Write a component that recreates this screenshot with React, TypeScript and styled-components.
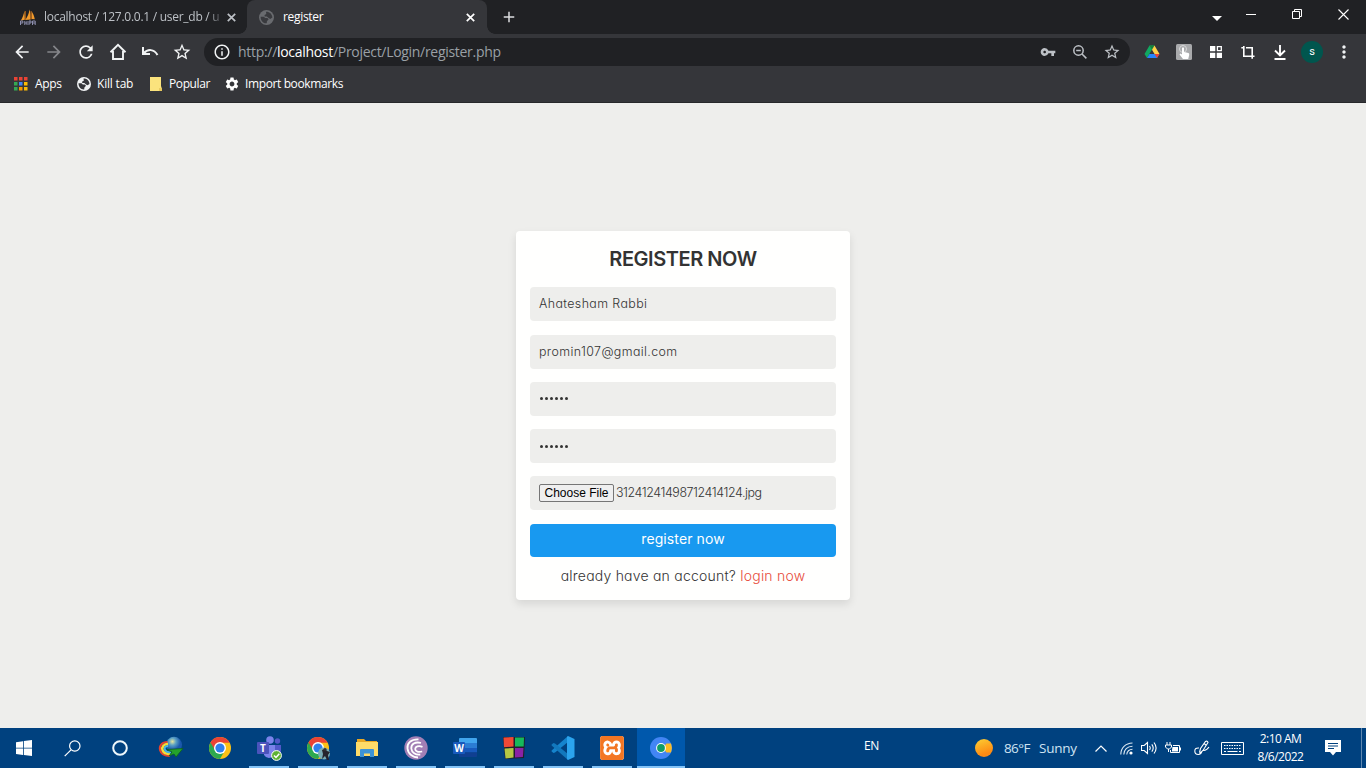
import React from 'react';
import styled, { createGlobalStyle, css } from 'styled-components';
import {
  MdArrowBack, MdArrowForward, MdRefresh, MdStarBorder, MdVpnKey,
  MdInfoOutline, MdMoreVert, MdSettings, MdAdd,
} from 'react-icons/md';
import { SiXampp } from 'react-icons/si';

const GlobalStyle = createGlobalStyle`
  * { box-sizing: border-box; }
  body { margin: 0; overflow: hidden; background: #eeeeec; }
  svg { display: block; flex: none; }
`;

const ui = `"Open Sans", "Noto Sans", sans-serif`;
const geo = `Inter, "Open Sans", sans-serif`;

const Screen = styled.div`
  width: 1366px;
  height: 768px;
  display: flex;
  flex-direction: column;
  font-family: ${ui};
  white-space: nowrap;
`;

const TabStrip = styled.header`
  height: 34px;
  flex: none;
  display: flex;
  background: #202124;
`;

const Tab = styled.div<{ $active?: boolean }>`
  width: ${p => (p.$active ? 240 : 247)}px;
  height: 34px;
  padding-left: ${p => (p.$active ? 12 : 20)}px;
  padding-right: ${p => (p.$active ? 12 : 11)}px;
  display: flex;
  align-items: center;
  color: ${p => (p.$active ? '#fff' : '#bdc1c6')};
  position: relative;
  ${p => p.$active && css`
    background: #35363a;
    border-radius: 8px 8px 0 0;
    &::before, &::after {
      content: '';
      position: absolute;
      bottom: 0;
      width: 8px;
      height: 8px;
    }
    &::before { left: -8px; background: radial-gradient(circle at 0 0, transparent 7.5px, #35363a 8px); }
    &::after { right: -8px; background: radial-gradient(circle at 100% 0, transparent 7.5px, #35363a 8px); }
  `}
`;

const TabTitle = styled.span<{ $fade?: boolean }>`
  flex: 1;
  margin-left: ${p => (p.$fade ? 8 : 9)}px;
  margin-right: 8px;
  font-size: 12px;
  line-height: 18px;
  letter-spacing: ${p => (p.$fade ? '-0.27px' : '-0.32px')};
  ${p => p.$fade && css`mask-image: linear-gradient(90deg, #000 164px, rgba(0, 0, 0, 0.2) 177px);`}
`;

const NewTab = styled.div`
  width: 44px;
  display: grid;
  place-items: center;
  color: #dcdddf;
`;

const WindowControls = styled.div`
  margin-left: auto;
  display: flex;
  height: 29px;
  color: #fff;
`;

const Control = styled.div<{ $w?: number; $drop?: number }>`
  width: ${p => p.$w ?? 46}px;
  padding-top: ${p => p.$drop ?? 0}px;
  display: grid;
  place-items: center;
`;

const Toolbar = styled.div`
  height: 36px;
  flex: none;
  display: flex;
  align-items: center;
  padding-left: 6px;
  padding-right: 6px;
  background: #35363a;
  color: #f1f3f4;
`;

const ToolButton = styled.div<{ $dim?: boolean }>`
  width: 32px;
  height: 32px;
  display: grid;
  place-items: center;
  color: ${p => (p.$dim ? '#85868a' : 'inherit')};
`;

const Omnibox = styled.div`
  width: 926px;
  height: 28px;
  margin-left: 6px;
  margin-right: 6px;
  border-radius: 14px;
  background: #202124;
  display: flex;
  align-items: center;
  padding-left: 9px;
  padding-right: 2px;
`;

const Url = styled.span`
  margin-left: 7px;
  flex: 1;
  font-size: 14px;
  line-height: 20px;
  letter-spacing: -0.3px;
  color: #9aa0a6;
  b { font-weight: 400; color: #fff; }
`;

const OmniActions = styled.div`
  display: flex;
  color: #bdc1c6;
`;

const Avatar = styled.div`
  width: 22px;
  height: 22px;
  border-radius: 50%;
  background: #00564e;
  color: #fff;
  font: 400 11px/21px Roboto, sans-serif;
  text-align: center;
`;

const BookmarkBar = styled.nav`
  height: 33px;
  flex: none;
  display: flex;
  align-items: center;
  padding: 0 0 5px 14px;
  background: #35363a;
  border-bottom: 1px solid #27282b;
`;

const Bookmark = styled.div<{ $w: number; $gap?: number; $ls?: number }>`
  width: ${p => p.$w}px;
  display: flex;
  align-items: center;
  gap: ${p => p.$gap ?? 6}px;
  font-size: 12px;
  line-height: 18px;
  letter-spacing: ${p => p.$ls ?? -0.3}px;
  color: #fff;
`;

const Page = styled.main`
  flex: 1;
  background: #eeeeec;
  padding-top: 128px;
`;

const Form = styled.div`
  width: 334px;
  height: 369px;
  margin: 0 auto;
  padding: 14px 14px 0;
  border-radius: 4px;
  background: #fffffe;
  box-shadow: 0 4px 8px rgba(0, 0, 0, 0.1);
  font-family: ${geo};
  font-feature-settings: 'cv11';
  color: #333;
`;

const Title = styled.h3`
  margin: 0 0 14.3px;
  height: 28px;
  text-align: center;
  font-size: 20px;
  font-weight: 600;
  line-height: 29px;
  letter-spacing: -0.45px;
`;

const Field = styled.div<{ $ls?: number }>`
  height: 34px;
  margin-bottom: 13.3px;
  padding-left: 9px;
  border-radius: 4px;
  background: #eeeeec;
  display: flex;
  align-items: center;
  font-size: 12.4px;
  font-weight: 300;
  line-height: 18px;
  letter-spacing: ${p => p.$ls ?? 0}px;
  color: #333;
`;

const Dots = styled.span`
  display: flex;
  gap: 2px;
  i { width: 3px; height: 3px; border-radius: 50%; background: #333; }
  padding-left: 1px;
`;

const FileButton = styled.span`
  width: 75px;
  height: 18px;
  margin-right: 2px;
  border: 1px solid #767676;
  border-radius: 2px;
  background: #efefef;
  color: #000;
  text-align: center;
  font: 12px/16px "Liberation Sans", sans-serif;
  letter-spacing: 0;
`;

const Submit = styled.div`
  height: 33.3px;
  border-radius: 4px;
  background: #1899f0;
  color: #fff;
  text-align: center;
  font-size: 14px;
  font-weight: 400;
  line-height: 30px;
  letter-spacing: 0.1px;
`;

const Hint = styled.p`
  margin: 9px 0 0;
  text-align: center;
  font-size: 14px;
  font-weight: 300;
  line-height: 20px;
  letter-spacing: 0.22px;
  color: #333;
  span { color: #e74c3c; }
`;

const Taskbar = styled.footer`
  height: 40px;
  flex: none;
  display: flex;
  background: #00417f;
  color: #fff;
`;

const SystemButton = styled.div`
  width: 48px;
  display: grid;
  place-items: center;
`;

const Apps = styled.div`
  display: flex;
  gap: 1px;
  margin-left: 3px;
`;

const AppButton = styled.div<{ $open?: boolean; $active?: boolean }>`
  width: 48px;
  height: 40px;
  display: grid;
  place-items: center;
  position: relative;
  background: ${p => (p.$active ? '#0058ac' : 'transparent')};
  ${p => p.$open && css`
    &::after {
      content: '';
      position: absolute;
      bottom: 0;
      left: ${p.$active ? 0 : 4}px;
      right: ${p.$active ? 0 : 4}px;
      height: 2px;
      background: #83c3f7;
    }
  `}
`;

const Language = styled.div`
  width: 16px;
  margin-left: 179px;
  font-size: 12px;
  line-height: 36px;
  letter-spacing: -0.5px;
`;

const Weather = styled.div`
  margin-left: 95px;
  width: 115px;
  display: flex;
  align-items: center;
  color: #cfe3f2;
  font-size: 13.5px;
  line-height: 40px;
  letter-spacing: -0.25px;
`;

const Sun = styled.i`
  width: 18px;
  height: 18px;
  border-radius: 50%;
  background: linear-gradient(160deg, #fcc62f 10%, #fd8a14 75%);
`;

const Temp = styled.span`
  margin-left: 11px;
  width: 35px;
  letter-spacing: -0.6px;
`;

const Tray = styled.div`
  display: flex;
  align-items: center;
`;

const TrayIcon = styled.div<{ $w: number }>`
  width: ${p => p.$w}px;
  display: grid;
  place-items: center;
`;

const Clock = styled.div`
  width: 65px;
  margin-left: -2px;
  text-align: center;
  font-size: 12px;
  line-height: 18px;
  letter-spacing: -0.5px;
`;

const ShowDesktop = styled.div`
  width: 5px;
  height: 40px;
  margin-left: auto;
  border-left: 1px solid #5f88b0;
`;

const CloseMark = () => (
  <svg width="9" height="9" fill="none" stroke="currentColor" strokeWidth="1.700"><path d="m.8.800 7.400 7.400m0-7.400L.8 8.200" /></svg>
);

const Globe = ({ size, fill, land }: { size: number; fill: string; land: string }) => (
  <svg width={size} height={size} viewBox="0 0 14 14">
    <circle cx="7" cy="7" r="7" fill={fill} />
    <path d="M1.500 6.200h3l1.300 1.300h2L9 8.700 7.400 10.400 7.200 12.400C4 12.700 1.500 10 1.500 6.200ZM6.500 1.600C9.500 1.300 12.300 3.500 12.500 7L10.500 8.300 9 7.400 7.300 6H5.200V4.600L6.800 3.800Z" fill={land} />
  </svg>
);

const PhpMyAdmin = () => (
  <svg width="16" height="17" viewBox="0 0 16 17">
    <path d="M4.500 1.500C3.800 5 2.500 9 .8 11.500l4-.7ZM9.500.5C9 5 7 8.500 5.200 11l5.300-.5C10.700 7 10.500 3 9.500.5ZM11.500 2c1.500 2.500 2.800 5 3.300 8.300l-3.300-.2Z" fill="#f19a2c" />
    <path d="M5.500 2v9M11 2v8.500" stroke="#c96b12" strokeWidth=".7" />
    <path d="M.5 12v4m0-4h2.300v2H.5m4.300-2v4m0-2H7m0-2v4m2-4v4m0-4h2v2H9m3.500 2v-4h2.700v4m-2.700-2h2.700" fill="none" stroke="#8d8fae" />
  </svg>
);

const AppsGrid = () => {
  const colors = ['#ea4335', '#ea4335', '#ea4335', '#34a853', '#4285f4', '#fbbc04', '#34a853', '#f29900', '#fbbc04'];
  return (
    <svg width="14" height="14">
      {colors.map((c, i) => <rect key={i} x={(i % 3) * 5} y={Math.floor(i / 3) * 5} width="3.500" height="3.500" fill={c} />)}
    </svg>
  );
};

const Drive = () => (
  <svg width="16" height="14" viewBox="0 0 16 14">
    <path d="M5.500.5h5l-2.500 4L3 13 .5 9Z" fill="#11a861" />
    <path d="M5.500.5h5L8 4.700Z" fill="#188038" />
    <path d="m10.500.5 5 8.500h-5L8 4.700Z" fill="#ffcf48" />
    <path d="M5.500 9h10L13 13H3Z" fill="#2684fc" />
    <path d="M10.500 9h5L13 13Z" fill="#ea4335" />
  </svg>
);

const Chrome = ({ children }: { children?: React.ReactNode }) => (
  <svg width="24" height="24" viewBox="0 0 24 24">
    <circle cx="12" cy="12" r="11" fill="#fbc116" />
    <path d="M12 12 2.500 6.500A11 11 0 0 0 12 23l4.700-8.200Z" fill="#2da94f" />
    <path d="M12 6.700h9.600A11 11 0 0 0 2.500 6.500l4.900 8.300Z" fill="#ea4335" />
    <circle cx="12" cy="12" r="6" fill="#fff" />
    <circle cx="12" cy="12" r="4.600" fill="#2f80ee" />
    {children}
  </svg>
);

const Idm = () => (
  <svg width="26" height="24" viewBox="0 0 26 24">
    <defs>
      <radialGradient id="idm" cx=".4" cy=".3">
        <stop offset="0" stopColor="#e9e69c" /><stop offset=".45" stopColor="#5ba1c5" /><stop offset="1" stopColor="#1b58ad" />
      </radialGradient>
    </defs>
    <circle cx="16" cy="8.800" r="8" fill="url(#idm)" />
    <path d="M9.500 6C4 6 1 10 2 14s5 6 10 6" fill="none" stroke="#e7432d" strokeWidth="2" />
    <path d="M10 8c-4 0-6.500 3-5.500 6s4 4 8 4" fill="none" stroke="#f6dc37" strokeWidth="2.500" />
    <path d="M10 10c-3 0-4 2-3 4s3 2.500 6 2.500" fill="none" stroke="#45b7e1" strokeWidth="2" />
    <path d="m9 13.500 16-1-7 8.500-2-3-5 2 3-4Z" fill="#24a32b" stroke="#0b5d22" strokeWidth=".8" />
  </svg>
);

const Teams = () => (
  <svg width="26" height="25" viewBox="0 0 26 25">
    <circle cx="14" cy="4" r="3.800" fill="#7b83eb" /><circle cx="21.500" cy="5" r="2.700" fill="#5059c9" />
    <path d="M17 9h8v7a4 4 0 0 1-7 3Z" fill="#5059c9" />
    <path d="M8 9h11v8a6 6 0 0 1-11 2Z" fill="#7b83eb" />
    <rect x="1" y="6" width="12" height="12" rx="1" fill="#4b53bc" />
    <text x="7" y="15.500" textAnchor="middle" fontSize="10" fontWeight="700" fontFamily="Open Sans" fill="#fff">T</text>
    <circle cx="20.500" cy="19.500" r="4.900" fill="#5db233" stroke="#fff" />
    <path d="m18 19.500 2 2 3.300-3.700" fill="none" stroke="#fff" strokeWidth="1.500" />
  </svg>
);

const Explorer = () => (
  <svg width="22" height="20" viewBox="0 0 22 20">
    <path d="M1 1h7l2 2h11v5H1Z" fill="#e9a825" />
    <path d="M0 4h22v14H0Z" fill="#fedb69" />
    <path d="M4 19v-7q0-1 1-1h12q1 0 1 1v7h-4v-3.500H8V19Z" fill="#3d93d6" />
  </svg>
);

const BitTorrent = () => (
  <svg width="24" height="24" viewBox="0 0 24 24">
    <circle cx="12" cy="12" r="11.700" fill="#a27fb5" />
    <path d="M14.500 3.300C7 3 2.800 7.500 3.500 12.500c.6 5.500 5.500 9 10.500 9M17 7C11 5.300 7 8.500 7.300 12.500c.4 4 4.200 6.500 9 6M18.500 10.800c-4-1.600-7.300-.3-7.300 2.200 0 2.700 3.500 3.500 7 2.500" fill="none" stroke="#fff" strokeWidth="1.800" />
  </svg>
);

const Word = () => (
  <svg width="24" height="20" viewBox="0 0 24 20">
    <path d="M7 0h16q1 0 1 1v4H6V1q0-1 1-1Z" fill="#41a5ee" /><path d="M6 5h18v5H6Z" fill="#2b7cd3" />
    <path d="M6 10h18v4.500H6Z" fill="#185abd" /><path d="M6 14.500h18V18q0 1-1 1H7q-1 0-1-1Z" fill="#103f91" />
    <rect y="4" width="12" height="12" rx="1" fill="#185abd" />
    <text x="6" y="13.600" textAnchor="middle" fontSize="10" fontWeight="700" fontFamily="Open Sans" fill="#fff">W</text>
  </svg>
);

const Blocks = () => (
  <svg width="24" height="24" viewBox="0 0 24 24">
    <path d="M1 1h22l-1 21-19 1Z" fill="#20202a" />
    <path d="m1.500 1.500 10-.5v9.500l-9.500.7Z" fill="#f14936" /><path d="M13 1.500h9l-.3 9H13Z" fill="#15b95b" />
    <path d="m2.500 12.500 9-.5v9.500l-8 1Z" fill="#b4c844" /><path d="M13 12h8.500l-.6 9-7.900.5Z" fill="#8a22a5" />
  </svg>
);

const Code = () => (
  <svg width="24" height="24" viewBox="0 0 24 24">
    <path d="M17 0v6L4 16.500 2.500 17 .6 15.500v-1Z" fill="#1584cd" />
    <path d="M17 24v-6L4 7.500 2.500 7 .6 8.500v1Z" fill="#1278bd" />
    <path d="m17 0 6.500 3v18L17 24l-1-1V1Z" fill="#2ba4ee" />
  </svg>
);

const Xampp = styled.div`
  width: 24px;
  height: 24px;
  border-radius: 3px;
  background: #fff;
  color: #f37623;
`;

const Chromium = () => (
  <svg width="24" height="24" viewBox="0 0 24 24">
    <circle cx="12" cy="12" r="11" fill="#4285f4" />
    <path d="M14 12 17.500 7.500H22q1.800 4.500 0 9h-4.500Z" fill="#fbbc24" />
    <circle cx="12" cy="12" r="4.900" fill="#fff" /><circle cx="12" cy="12" r="3.900" fill="#0f9d68" />
  </svg>
);

const App = () => (
  <Screen>
    <GlobalStyle />
    <TabStrip>
      <Tab>
        <PhpMyAdmin />
        <TabTitle $fade>localhost / 127.0.0.1 / user_db / u</TabTitle>
        <CloseMark />
      </Tab>
      <Tab $active>
        <Globe size={15} fill="#696b6f" land="#393a3e" />
        <TabTitle>register</TabTitle>
        <CloseMark />
      </Tab>
      <NewTab><MdAdd size={18} /></NewTab>
      <WindowControls>
        <Control $w={22} $drop={8}><svg width="10" height="5"><path d="M0 0h10L5 5Z" fill="#fff" /></svg></Control>
        <Control><svg width="10" height="1"><path d="M0 0h10v1H0Z" fill="#fff" /></svg></Control>
        <Control><svg width="11" height="11" fill="none" stroke="#fff"><path d="M.5 2.500h7v7h-7ZM2.500 2.500v-2h7v7h-2" /></svg></Control>
        <Control><svg width="11" height="11" fill="none" stroke="#fff" strokeWidth="1.100"><path d="m.5.500 10 10m0-10-10 10" /></svg></Control>
      </WindowControls>
    </TabStrip>

    <Toolbar>
      <ToolButton><MdArrowBack size={20} /></ToolButton>
      <ToolButton $dim><MdArrowForward size={20} /></ToolButton>
      <ToolButton><MdRefresh size={20} /></ToolButton>
      <ToolButton>
        <svg width="18" height="18" fill="none" stroke="currentColor" strokeWidth="1.900"><path d="M1.500 9.200 9 1.900l7.500 7.300M4 8v8h10V8" /></svg>
      </ToolButton>
      <ToolButton>
        <svg width="18" height="12" fill="none" stroke="currentColor" strokeWidth="2"><path d="M2 1v7h7M2.500 7.500C7 2.500 13 3 16.500 9" /></svg>
      </ToolButton>
      <ToolButton><MdStarBorder size={20} /></ToolButton>
      <Omnibox>
        <MdInfoOutline size={18} />
        <Url>http://<b>localhost</b>/Project/Login/register.php</Url>
        <OmniActions>
          <ToolButton><MdVpnKey size={16} /></ToolButton>
          <ToolButton>
            <svg width="14" height="14" fill="none" stroke="currentColor" strokeWidth="1.500"><circle cx="5.500" cy="5.500" r="4.700" /><path d="m9 9 4.400 4.400M3.200 5.500h4.600" /></svg>
          </ToolButton>
          <ToolButton><MdStarBorder size={18} /></ToolButton>
        </OmniActions>
      </Omnibox>
      <ToolButton><Drive /></ToolButton>
      <ToolButton>
        <svg width="16" height="16">
          <rect width="16" height="16" rx="1.500" fill="#a9aaac" />
          <circle cx="7" cy="5" r="3.500" fill="none" stroke="#d9d9da" />
          <path d="M6 4q1-1.500 2 0v4l4.500 1q1 .5.700 2l-1 4H7L3.500 10.500 4.500 9.500 6 10.500Z" fill="#fff" />
        </svg>
      </ToolButton>
      <ToolButton>
        <svg width="12" height="12" fill="#fff"><path d="M0 0h5.300v5.300H0ZM0 6.700h5.300V12H0ZM6.700 6.700H12V12H6.700Z" /><path d="M7.400.7h3.900v3.900H7.400Z" fill="none" stroke="#fff" strokeWidth="1.300" /></svg>
      </ToolButton>
      <ToolButton>
        <svg width="14" height="14" fill="none" stroke="#fff" strokeWidth="1.600"><path d="M.3 2.800h2.500v8.400h10.700M11.200 13.700V2.800H5M2.800 1v2" /></svg>
      </ToolButton>
      <ToolButton>
        <svg width="12" height="15" fill="none" stroke="#fff" strokeWidth="1.900"><path d="M6 0v10M1 5.500l5 5 5-5M.5 14h11" /></svg>
      </ToolButton>
      <ToolButton><Avatar>s</Avatar></ToolButton>
      <ToolButton><MdMoreVert size={20} /></ToolButton>
    </Toolbar>

    <BookmarkBar>
      <Bookmark $w={63} $gap={7}><AppsGrid />Apps</Bookmark>
      <Bookmark $w={73} $ls={-0.2}><Globe size={14} fill="#f1f3f4" land="#35363a" />Kill tab</Bookmark>
      <Bookmark $w={74} $gap={7} $ls={-0.4}>
        <svg width="12" height="14"><path d="M0 0h11v9l1 3v2H0Z" fill="#fbe37d" /><path d="m9 11 3 .5V14H9Z" fill="#e8c95e" /></svg>
        Popular
      </Bookmark>
      <Bookmark $w={130} $gap={5} $ls={-0.38}><MdSettings size={16} />Import bookmarks</Bookmark>
    </BookmarkBar>

    <Page>
      <Form>
        <Title>REGISTER NOW</Title>
        <Field $ls={0.4}>Ahatesham Rabbi</Field>
        <Field $ls={0.4}>promin107@gmail.com</Field>
        <Field><Dots><i /><i /><i /><i /><i /><i /></Dots></Field>
        <Field><Dots><i /><i /><i /><i /><i /><i /></Dots></Field>
        <Field $ls={-0.4}><FileButton>Choose File</FileButton>31241241498712414124.jpg</Field>
        <Submit>register now</Submit>
        <Hint>already have an account? <span>login now</span></Hint>
      </Form>
    </Page>

    <Taskbar>
      <SystemButton>
        <svg width="16" height="16" fill="#fff"><path d="M0 2.200 7 1.200v6.500H0ZM7.800 1.100 16 0v7.700H7.800ZM0 8.500h7v6.500l-7-1ZM7.800 8.500H16V16l-8.200-1.100Z" /></svg>
      </SystemButton>
      <SystemButton>
        <svg width="17" height="17" fill="none" stroke="#fff" strokeWidth="1.200"><circle cx="10.800" cy="6" r="5.200" /><path d="m7 9.800-6.300 6.400" /></svg>
      </SystemButton>
      <SystemButton>
        <svg width="16" height="16" fill="none" stroke="#eef7fb" strokeWidth="2"><circle cx="8" cy="8" r="6.800" /></svg>
      </SystemButton>
      <Apps>
        <AppButton><Idm /></AppButton>
        <AppButton><Chrome /></AppButton>
        <AppButton $open><Teams /></AppButton>
        <AppButton $open>
          <Chrome>
            <circle cx="18" cy="17.500" r="6" fill="#78aeb5" />
            <path d="m16 14 3-1 2 2 3 1-2 3 1 5h-2l-2-4-3 3 1-5Z" fill="#25252c" />
            <circle cx="19" cy="13.500" r="1.600" fill="#34302e" />
          </Chrome>
        </AppButton>
        <AppButton $open><Explorer /></AppButton>
        <AppButton $open><BitTorrent /></AppButton>
        <AppButton $open><Word /></AppButton>
        <AppButton $open><Blocks /></AppButton>
        <AppButton $open><Code /></AppButton>
        <AppButton $open><Xampp><SiXampp size={24} /></Xampp></AppButton>
        <AppButton $open $active><Chromium /></AppButton>
      </Apps>
      <Language>EN</Language>
      <Weather><Sun /><Temp>86°F</Temp><span>Sunny</span></Weather>
      <Tray>
        <TrayIcon $w={22}><svg width="12" height="7" fill="none" stroke="#fff" strokeWidth="1.200"><path d="m.5 6.500 5.500-5.500 5.500 5.500" /></svg></TrayIcon>
        <TrayIcon $w={28}>
          <svg width="13" height="13" fill="none" stroke="#dce9f3" strokeWidth="1.100">
            <path d="M.8 12.500C.8 6 5.500 1.200 12.500 1M3.800 12.500c0-4.500 3.500-8.200 8.700-8.300M6.800 12.500c0-3 2.500-5.300 5.700-5.300" /><circle cx="11" cy="11" r="1.600" fill="#fff" stroke="none" />
          </svg>
        </TrayIcon>
        <TrayIcon $w={18}>
          <svg width="17" height="14" fill="none" stroke="#fff" strokeWidth="1.100">
            <path d="M.5 4.500h2.700L6.500 1.500v11L3.200 9.500H.5ZM8.500 5q1.500 2 0 4M10.800 3.300q2.800 3.700 0 7.400M13 1.500q4.200 5.500 0 11" />
          </svg>
        </TrayIcon>
        <TrayIcon $w={30}>
          <svg width="16" height="13" fill="none" stroke="#fff">
            <path d="M2 0v3M5 0v3M.5 3h6v2L4.500 7h-2L.5 5ZM3.500 7v3M8 3.500h6.500v7H5.500V8" /><path d="M7.500 5h5.500v4.500h-6V8Z" fill="#fff" stroke="none" /><path d="M15.500 5.500v3" />
          </svg>
        </TrayIcon>
        <TrayIcon $w={27}>
          <svg width="16" height="16" fill="none" stroke="#fff" strokeWidth="1.100">
            <path d="m5.500 12.500 1-4 5-7q1.800-1 2.500 1L9 10.500l-3.500 3M5 8Q.8 7.500.8 11t3.500 3.500q3 0 3.500-3M9.500 10.500q2.500.5 5.500-3.500M10 3.500l2 1.500" />
          </svg>
        </TrayIcon>
        <TrayIcon $w={35}>
          <svg width="23" height="13" fill="none" stroke="#fff">
            <path d="M.5.500h22v12H.5Z" /><path d="M3 3.500h17M3 6.500h17" strokeDasharray="1.500 1" /><path d="M3 9.500h2M6.500 9.500h10M18 9.500h2" />
          </svg>
        </TrayIcon>
        <Clock>2:10 AM<br />8/6/2022</Clock>
        <TrayIcon $w={40}>
          <svg width="16" height="16"><path d="M0 0h16v12h-5l-3 3.500L5 12H0Z" fill="#fff" /><path d="M3 3.500h10M3 6h10M3 8.500h6" stroke="#00417f" /></svg>
        </TrayIcon>
      </Tray>
      <ShowDesktop />
    </Taskbar>
  </Screen>
);

export default App;
